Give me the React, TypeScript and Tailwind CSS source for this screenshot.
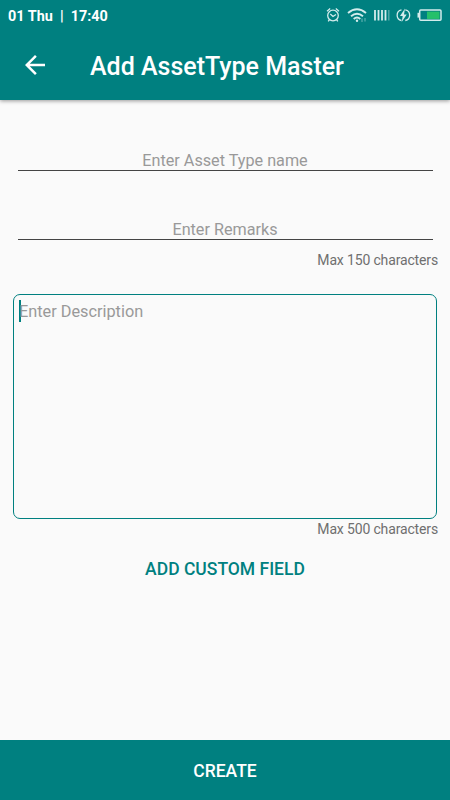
import type { ReactNode } from "react";

function StatusIcons() {
  return (
    <svg className="h-[31px] w-[120px]" viewBox="325 0 120 31" fill="none" stroke="#d3ecec" strokeWidth={1.3}>
      {/* alarm */}
      <circle cx="333" cy="15.5" r="5.300" />
      <path d="M330.300 14l2.700 2.500 3-2M327 11.200l3.200-2.700M339 11.200l-3.200-2.700M329.500 19.500l-1.300 1.800M336.500 19.500l1.300 1.800" />
      {/* wifi */}
      <path d="M348 13q9-7.500 18 0M351 16.300q6-5 12 0M353.700 19q3.300-2.800 6.600 0" strokeWidth={1.9} />
      <circle cx="357" cy="20.800" r="1.200" fill="#d3ecec" stroke="none" />
      <path d="M362 18.500v3.500M365 18v3.500" strokeWidth={1} opacity={0.5} />
      {/* signal bars */}
      <path d="M375 10v10.500M378.500 10v10.500M382 10v10.500M385.500 10v10.500" strokeWidth={1.8} />
      <path d="M388.800 10v10.500" strokeWidth={1.4} opacity={0.4} />
      {/* charging */}
      <path d="M401.500 20.500a5.400 5.400 0 0 1 0-10.600M405.300 9.900a5.400 5.400 0 0 1 0 10.600" />
      <path d="M405 8.500l-5 7.500h2.700l-1 6 5-7.500h-2.700z" fill="#d3ecec" stroke="none" />
      {/* battery */}
      <rect x="419.700" y="10" width="21.300" height="10.200" rx="1" strokeWidth={1.5} />
      <path d="M418.300 12.800v4.800" strokeWidth={1.6} />
      <rect x="427" y="11.600" width="12.500" height="7.300" fill="#25c06a" stroke="none" />
    </svg>
  );
}

function Field({ children }: { children: ReactNode }) {
  return (
    <div className="mx-[17.5px] h-[27px] border-b border-[#444] text-center text-[16.200px] leading-[33px] text-[#999]">
      {children}
    </div>
  );
}

function Hint({ children }: { children: ReactNode }) {
  return <p className="pr-3 text-right text-sm leading-5 tracking-[-0.15px] text-[#6f6f6f]">{children}</p>;
}

export default function App() {
  return (
    <div className="flex h-[800px] w-[450px] flex-col bg-[#fafafa] font-['Roboto',sans-serif]">
      <header className="h-[100px] bg-[#008080] text-white shadow-[0_1px_4px_rgba(0,0,0,0.4)]">
        <div className="flex h-[31px] items-center justify-between pr-[5px] pl-2">
          <span className="pt-0.5 text-[14.400px] font-bold whitespace-pre">01 Thu  |  17:40</span>
          <StatusIcons />
        </div>
        <div className="flex h-[69px] items-center pl-5">
          <svg className="mb-0.5 size-[30px]" viewBox="0 0 24 24" fill="currentColor">
            <path d="M20 11H7.830l5.590-5.590L12 4l-8 8 8 8 1.410-1.410L7.830 13H20v-2z" />
          </svg>
          <h1 className="mt-0.5 ml-10 text-[25px] font-medium">Add AssetType Master</h1>
        </div>
      </header>

      <main className="flex flex-1 flex-col">
        <div className="pt-11">
          <Field>Enter Asset Type name</Field>
        </div>
        <div className="pt-[42px]">
          <Field>Enter Remarks</Field>
        </div>
        <div className="mt-[10px]">
          <Hint>Max 150 characters</Hint>
        </div>
        <div className="mr-[13px] ml-[12.5px] mt-6 h-[225px] rounded-[7px] border border-[#008080] px-[5.5px] pt-[5px]">
          <div className="flex items-start text-[16.300px] leading-6 text-[#999]">
            <span className="-mr-0.5 h-[22px] w-0.5 bg-[#008080]" />
            <span>Enter Description</span>
          </div>
        </div>
        <Hint>Max 500 characters</Hint>
        <button className="mx-auto mt-[17px] text-[17.500px] leading-[26px] font-medium text-[#008080]">ADD CUSTOM FIELD</button>
      </main>

      <button className="h-[60px] bg-[#008080] pt-[3px] text-[17.500px] font-medium text-white">CREATE</button>
    </div>
  );
}
